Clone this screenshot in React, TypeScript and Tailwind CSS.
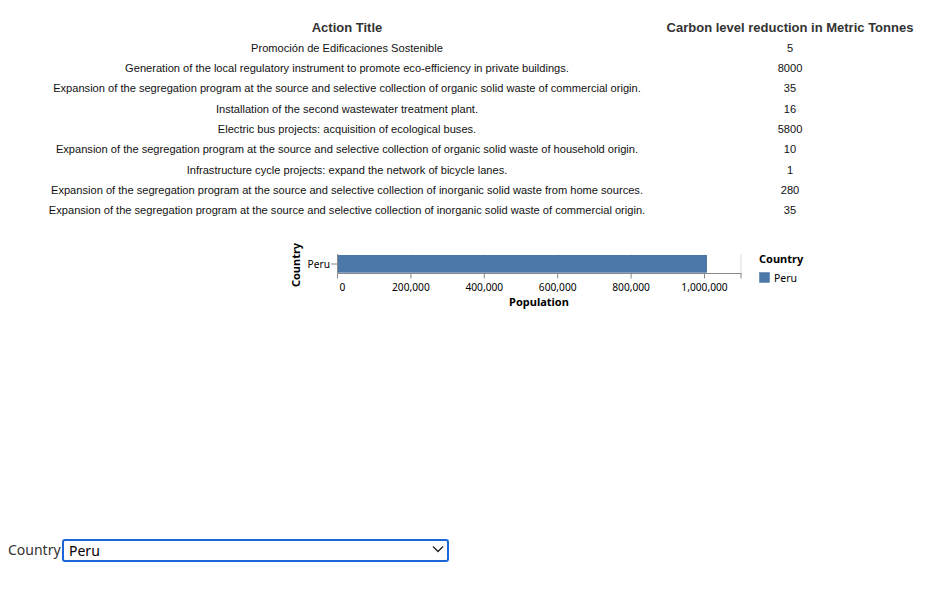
import React from 'react';

const actions = [
  { title: 'Promoción de Edificaciones Sostenible', value: 5 },
  { title: 'Generation of the local regulatory instrument to promote eco-efficiency in private buildings.', value: 8000 },
  { title: 'Expansion of the segregation program at the source and selective collection of organic solid waste of commercial origin.', value: 35 },
  { title: 'Installation of the second wastewater treatment plant.', value: 16 },
  { title: 'Electric bus projects: acquisition of ecological buses.', value: 5800 },
  { title: 'Expansion of the segregation program at the source and selective collection of organic solid waste of household origin.', value: 10 },
  { title: 'Infrastructure cycle projects: expand the network of bicycle lanes.', value: 1 },
  { title: 'Expansion of the segregation program at the source and selective collection of inorganic solid waste from home sources.', value: 280 },
  { title: 'Expansion of the segregation program at the source and selective collection of inorganic solid waste of commercial origin.', value: 35 },
];

const ticks = ['0', '200,000', '400,000', '600,000', '800,000', '1,000,000'];

const PopulationChart: React.FC = () => {
  const x0 = 52.5;
  const step = 73.4;
  return (
    <svg width="540" height="75" className="block" style={{ fontFamily: '"Noto Sans", "Open Sans", sans-serif' }}>
      <text x="15" y="25" transform="rotate(-90 15 25)" textAnchor="middle" fontSize="11" fontWeight="700" fill="#000">
        Country
      </text>
      {ticks.map((t, i) => (
        <line key={'g' + t} x1={x0 + i * step} x2={x0 + i * step} y1="14" y2="33" stroke="#ddd" strokeWidth="1" />
      ))}
      <line x1="456" x2="456" y1="14" y2="33" stroke="#ddd" strokeWidth="1" />
      <rect x={x0} y="15" width="369.5" height="17.7" fill="#4c78a8" />
      <line x1="46" x2={x0} y1="24" y2="24" stroke="#888" strokeWidth="1" />
      <text x="45" y="27.5" textAnchor="end" fontSize="10.2" fill="#000">
        Peru
      </text>
      <line x1={x0} x2={x0} y1="14" y2="33" stroke="#888" strokeWidth="1" />
      <line x1={x0} x2="456.5" y1="33.5" y2="33.5" stroke="#888" strokeWidth="1" />
      {ticks.map((t, i) => (
        <g key={t}>
          <line x1={x0 + i * step} x2={x0 + i * step} y1="33.5" y2="38.5" stroke="#888" strokeWidth="1" />
          <text x={x0 + i * step + (i === 0 ? 2 : 0)} y="51" textAnchor={i === 0 ? 'start' : 'middle'} fontSize="10.2" fill="#000">
            {t}
          </text>
        </g>
      ))}
      <line x1="456" x2="456" y1="33.5" y2="38.5" stroke="#888" strokeWidth="1" />
      <text x="254" y="66" textAnchor="middle" fontSize="11" fontWeight="700" fill="#000">
        Population
      </text>
      <text x="474" y="23" fontSize="11" fontWeight="700" fill="#000">
        Country
      </text>
      <rect x="474.5" y="32.5" width="10" height="10" fill="#4c78a8" stroke="#4c78a8" strokeWidth="0.5" />
      <text x="489" y="41.5" fontSize="10.5" fill="#000">
        Peru
      </text>
    </svg>
  );
};

const App: React.FC = () => {
  return (
    <div className="w-[936px] h-[604px] bg-white overflow-hidden">
      {/* actions table */}
      <div className="pt-[17px] ml-[29px] font-['Liberation_Sans',Arial,sans-serif]">
        <div className="grid grid-cols-[636px_250px] h-[21px] items-center text-[13px] font-bold text-[#333]">
          <div className="text-center">Action Title</div>
          <div className="text-center">Carbon level reduction in Metric Tonnes</div>
        </div>
        {actions.map((a, i) => (
          <div key={i} className="grid grid-cols-[636px_250px] h-[20.3px] items-center text-[11.1px] text-[#111]">
            <div className="text-center whitespace-nowrap">{a.title}</div>
            <div className="text-center">{a.value}</div>
          </div>
        ))}
      </div>

      <div className="mt-[19px] ml-[285px]">
        <PopulationChart />
      </div>

      <div className="mt-[223px] ml-[8px] flex items-center font-['Noto_Sans','Open_Sans',sans-serif]">
        <label htmlFor="country" className="text-[14px] text-[#333] leading-none w-[54px]">
          Country
        </label>
        <div className="relative">
          <select
            id="country"
            defaultValue="Peru"
            className="appearance-none w-[387px] h-[23px] border-2 border-[#1a66d6] rounded-[3px] pl-[5px] text-[14px] text-black bg-white leading-none"
          >
            <option value="Peru">Peru</option>
          </select>
          <svg className="absolute right-[5px] top-[7px]" width="12" height="8" viewBox="0 0 12 8" fill="none">
            <path d="M1 1.5 L6 6.5 L11 1.5" stroke="#222" strokeWidth="1.3" />
          </svg>
        </div>
      </div>
    </div>
  );
};

export default App;
